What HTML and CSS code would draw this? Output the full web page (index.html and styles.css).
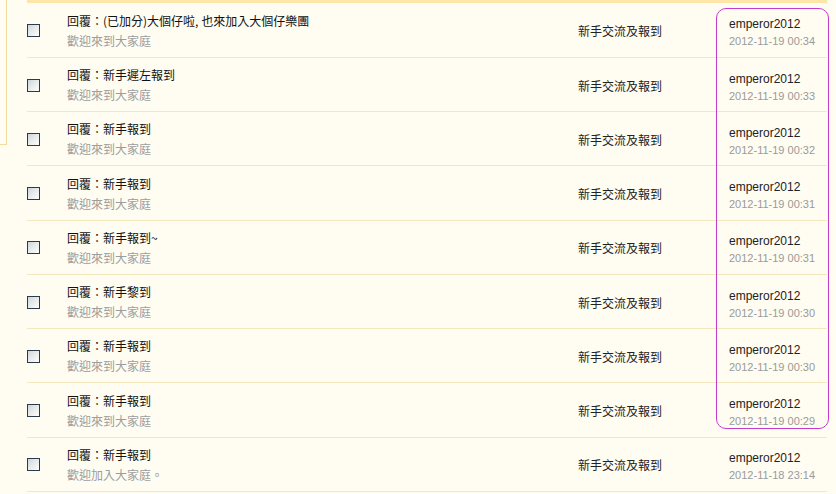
FILE: index.html
```html
<!DOCTYPE html>
<html lang="zh-Hant">
<head>
<meta charset="utf-8">
<title>回覆列表</title>
<link rel="stylesheet" href="styles.css">
</head>
<body>
<div class="page">
  <div class="side"></div>
  <div class="list">
    <div class="row">
      <div class="c-check"><input type="checkbox" class="cb"></div>
      <div class="c-title"><div class="t">回覆：(已加分)大個仔啦, 也來加入大個仔樂團</div><div class="s">歡迎來到大家庭</div></div>
      <div class="c-forum">新手交流及報到</div>
      <div class="c-author"><div class="a">emperor2012</div><div class="d">2012-11-19 00:34</div></div>
    </div>
    <div class="row">
      <div class="c-check"><input type="checkbox" class="cb"></div>
      <div class="c-title"><div class="t">回覆：新手遲左報到</div><div class="s">歡迎來到大家庭</div></div>
      <div class="c-forum">新手交流及報到</div>
      <div class="c-author"><div class="a">emperor2012</div><div class="d">2012-11-19 00:33</div></div>
    </div>
    <div class="row">
      <div class="c-check"><input type="checkbox" class="cb"></div>
      <div class="c-title"><div class="t">回覆：新手報到</div><div class="s">歡迎來到大家庭</div></div>
      <div class="c-forum">新手交流及報到</div>
      <div class="c-author"><div class="a">emperor2012</div><div class="d">2012-11-19 00:32</div></div>
    </div>
    <div class="row">
      <div class="c-check"><input type="checkbox" class="cb"></div>
      <div class="c-title"><div class="t">回覆：新手報到</div><div class="s">歡迎來到大家庭</div></div>
      <div class="c-forum">新手交流及報到</div>
      <div class="c-author"><div class="a">emperor2012</div><div class="d">2012-11-19 00:31</div></div>
    </div>
    <div class="row">
      <div class="c-check"><input type="checkbox" class="cb"></div>
      <div class="c-title"><div class="t">回覆：新手報到~</div><div class="s">歡迎來到大家庭</div></div>
      <div class="c-forum">新手交流及報到</div>
      <div class="c-author"><div class="a">emperor2012</div><div class="d">2012-11-19 00:31</div></div>
    </div>
    <div class="row">
      <div class="c-check"><input type="checkbox" class="cb"></div>
      <div class="c-title"><div class="t">回覆：新手黎到</div><div class="s">歡迎來到大家庭</div></div>
      <div class="c-forum">新手交流及報到</div>
      <div class="c-author"><div class="a">emperor2012</div><div class="d">2012-11-19 00:30</div></div>
    </div>
    <div class="row">
      <div class="c-check"><input type="checkbox" class="cb"></div>
      <div class="c-title"><div class="t">回覆：新手報到</div><div class="s">歡迎來到大家庭</div></div>
      <div class="c-forum">新手交流及報到</div>
      <div class="c-author"><div class="a">emperor2012</div><div class="d">2012-11-19 00:30</div></div>
    </div>
    <div class="row">
      <div class="c-check"><input type="checkbox" class="cb"></div>
      <div class="c-title"><div class="t">回覆：新手報到</div><div class="s">歡迎來到大家庭</div></div>
      <div class="c-forum">新手交流及報到</div>
      <div class="c-author"><div class="a">emperor2012</div><div class="d">2012-11-19 00:29</div></div>
    </div>
    <div class="row">
      <div class="c-check"><input type="checkbox" class="cb"></div>
      <div class="c-title"><div class="t">回覆：新手報到</div><div class="s">歡迎加入大家庭。</div></div>
      <div class="c-forum">新手交流及報到</div>
      <div class="c-author"><div class="a">emperor2012</div><div class="d">2012-11-18 23:14</div></div>
    </div>
  </div>
  <div class="highlight"></div>
</div>
</body>
</html>
```
FILE: styles.css
```css
html, body {
  margin: 0;
  padding: 0;
  background: #fffcf1;
}
body {
  font-family: "Noto Sans CJK SC", "Liberation Sans", sans-serif;
  font-size: 12px;
  color: #000;
  overflow: hidden;
}
.page {
  position: relative;
  display: flex;
  align-items: flex-start;
  width: 836px;
  height: 494px;
}
.side {
  width: 6px;
  height: 144px;
  border-right: 1px solid #f1dc9d;
  border-bottom: 1px solid #f1dc9d;
  flex: none;
}
.list {
  margin-left: 20px;
  width: 800px;
  border-top: 3px solid #fde6a8;
  padding-top: 0.7px;
}
.row {
  display: grid;
  grid-template-columns: 40px 511px 151px 1fr;
  align-items: center;
  height: 53.25px;
  border-bottom: 1px solid #f4e7bd;
}
.c-check {
  display: flex;
  align-items: center;
  padding-top: 1px;
}
.cb {
  appearance: none;
  -webkit-appearance: none;
  margin: 0;
  width: 13px;
  height: 13px;
  box-sizing: border-box;
  border: 1px solid #2c3a4e;
  background: linear-gradient(135deg, #cdd5dc 0%, #e9ecec 50%, #fdfdfb 100%);
}
.c-title {
  padding-top: 1px;
  line-height: 20px;
}
.c-title .t {
  color: #111;
  white-space: nowrap;
}
.c-title .s {
  color: #9d9d9d;
}
.c-forum {
  color: #222;
  padding-top: 1px;
}
.c-author {
  font-family: "Liberation Sans", Arial, sans-serif;
  padding-top: 5px;
}
.c-author .a {
  font-size: 12px;
  line-height: 17px;
  color: #222;
}
.c-author .d {
  font-size: 11px;
  line-height: 16px;
  color: #9a9a9a;
}
.highlight {
  position: absolute;
  left: 716px;
  top: 8px;
  width: 111px;
  height: 419px;
  border: 1px solid #c53ccd;
  border-radius: 10px;
  pointer-events: none;
}
```
